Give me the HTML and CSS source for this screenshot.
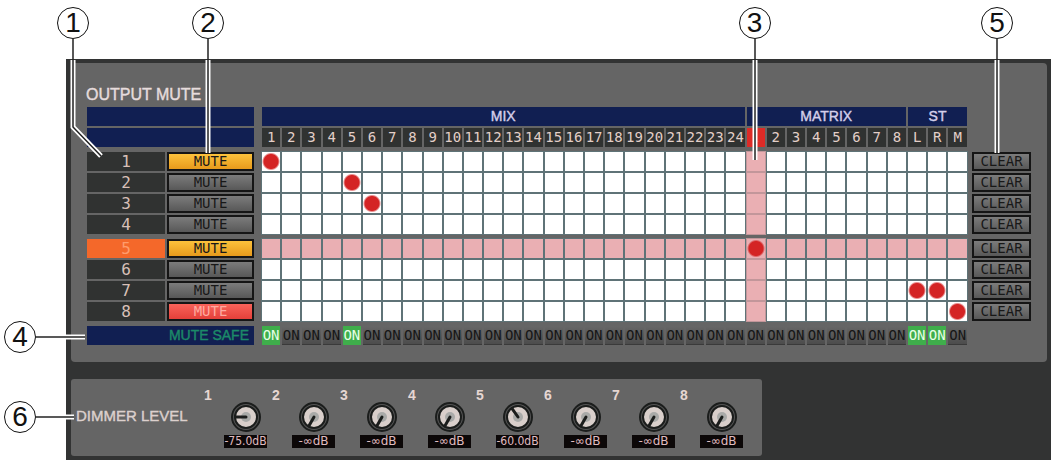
FILE: index.html
```html
<!DOCTYPE html>
<html lang="en">

<head>
  <meta charset="UTF-8">
  <meta name="viewport" content="width=device-width, initial-scale=1.0">
  <title>Output Mute</title>
  <link rel="stylesheet" href="styles.css">
</head>

<body>
  <div class="figure">
    <div class="console">
      <section class="panel">
        <h2 class="title">OUTPUT MUTE</h2>
        <table class="matrix">
          <colgroup>
            <col class="col-group">
            <col class="col-mute">
            <col class="col-gap">
            <col span="35">
            <col class="col-edge">
            <col class="col-clear">
          </colgroup>
          <thead>
            <tr>
              <td class="bar" colspan="2"></td>
              <td></td>
              <th class="bar" colspan="24">MIX</th>
              <th class="bar" colspan="8">MATRIX</th>
              <th class="bar" colspan="3">ST</th>
            </tr>
            <tr id="channels">
              <td class="bar" colspan="2"></td>
              <td></td>
            </tr>
          </thead>
          <tbody id="groups"></tbody>
          <tfoot>
            <tr class="space"><td></td></tr>
            <tr id="safe">
              <th class="bar safe-label" colspan="2">MUTE SAFE</th>
              <td></td>
            </tr>
          </tfoot>
        </table>
      </section>

      <section class="dimmer">
        <h2 class="dimmer-title">DIMMER LEVEL</h2>
        <div class="knobs" id="knobs"></div>
      </section>
    </div>

    <!-- callouts -->
    <div class="callout top one">
      <span class="num">1</span>
      <svg width="48" height="120" viewBox="0 0 48 120">
        <path class="halo" d="M16 21V88L44 117" />
        <path class="line" d="M16 0V88L44 117" />
      </svg>
    </div>
    <div class="callout top two">
      <span class="num">2</span>
      <svg width="32" height="114" viewBox="0 0 32 114">
        <path class="halo" d="M16 21V114" />
        <path class="line" d="M16 0V114" />
      </svg>
    </div>
    <div class="callout top three">
      <span class="num">3</span>
      <svg width="32" height="121" viewBox="0 0 32 121">
        <path class="halo" d="M16 21V121" />
        <path class="line" d="M16 0V121" />
      </svg>
    </div>
    <div class="callout top five">
      <span class="num">5</span>
      <svg width="32" height="114" viewBox="0 0 32 114">
        <path class="halo" d="M16 21V114" />
        <path class="line" d="M16 0V114" />
      </svg>
    </div>
    <div class="callout side four">
      <span class="num">4</span>
      <svg width="49" height="8" viewBox="0 0 49 8">
        <path class="halo" d="M30 4H49" />
        <path class="line" d="M0 4H49" />
      </svg>
    </div>
    <div class="callout side six">
      <span class="num">6</span>
      <svg width="38" height="8" viewBox="0 0 38 8">
        <path class="halo" d="M30 4H38" />
        <path class="line" d="M0 4H38" />
      </svg>
    </div>
  </div>

  <script>
    const channels = []
    for (let i = 1; i <= 24; i++) channels.push(String(i))
    for (let i = 1; i <= 8; i++) channels.push(String(i))
    channels.push('L', 'R', 'M')

    // selected crosspoint
    const selectedRow = 4
    const selectedCol = 24

    // assigned outputs of each mute group
    const groups = [
      { mute: 'on', assign: [0] },
      { mute: '', assign: [4] },
      { mute: '', assign: [5] },
      { mute: '', assign: [] },
      { mute: 'on', assign: [24] },
      { mute: '', assign: [] },
      { mute: '', assign: [32, 33] },
      { mute: 'dim', assign: [34] }
    ]
    const safe = [0, 4, 32, 33]

    const channelRow = document.getElementById('channels')
    channels.forEach((name, i) => {
      const cls = i === selectedCol ? 'channel selected' : 'channel'
      channelRow.insertAdjacentHTML('beforeend', `<th class="${cls}">${name}</th>`)
    })

    const space = '<tr class="space"><td></td></tr>'
    let rows = space
    groups.forEach((group, r) => {
      // rows are split in two blocks of four
      if (r === 4) rows += space
      const cells = channels.map((name, c) => {
        let cls = 'cell'
        if (c === selectedCol) cls += ' col-selected'
        if (r === selectedRow) cls += ' row-selected'
        const checked = group.assign.includes(c) ? 'checked' : ''
        return `<td class="${cls}"><input type="checkbox" aria-label="Group ${r + 1}, output ${c + 1}" ${checked}></td>`
      }).join('')
      rows += `<tr>
        <th class="group ${r === selectedRow ? 'selected' : ''}">${r + 1}</th>
        <td><button class="button mute ${group.mute}">MUTE</button></td>
        <td></td>
        ${cells}
        <td></td>
        <td><button class="button clear">CLEAR</button></td>
      </tr>`
    })
    document.getElementById('groups').innerHTML = rows

    const safeRow = document.getElementById('safe')
    channels.forEach((name, i) => {
      const cls = safe.includes(i) ? 'safe active' : 'safe'
      safeRow.insertAdjacentHTML('beforeend', `<td><button class="${cls}">ON</button></td>`)
    })

    // knob angle is clockwise from 12 o'clock
    const dimmers = [
      { db: '-75.0dB', angle: -90, value: 15 },
      { db: '-∞dB', angle: -150, value: 0 },
      { db: '-∞dB', angle: -150, value: 0 },
      { db: '-∞dB', angle: -150, value: 0 },
      { db: '-60.0dB', angle: -35, value: 35 },
      { db: '-∞dB', angle: -150, value: 0 },
      { db: '-∞dB', angle: -150, value: 0 },
      { db: '-∞dB', angle: -150, value: 0 }
    ]
    document.getElementById('knobs').innerHTML = dimmers.map((d, i) => `
      <div class="knob">
        <label for="dimmer${i + 1}">${i + 1}</label>
        <div class="dial">
          <svg width="30" height="30" viewBox="0 0 30 30">
            <circle cx="15" cy="15" r="14" fill="#555" stroke="#1b1d1c" stroke-width="2" />
            <circle cx="15" cy="15" r="11" fill="#d9cfcb" stroke="#1b1d1c" stroke-width="2" />
            <circle cx="15" cy="15" r="5" fill="#a9aaa8" />
            <path d="M15 15V5" stroke="#1b1d1c" stroke-width="3" stroke-linecap="round" transform="rotate(${d.angle} 15 15)" />
          </svg>
          <input type="range" id="dimmer${i + 1}" value="${d.value}">
        </div>
        <output class="${d.value ? '' : 'off'}" for="dimmer${i + 1}">${d.db}</output>
      </div>`).join('')
  </script>
</body>

</html>
```
FILE: styles.css
```css
* {
  box-sizing: border-box;
  margin: 0;
  padding: 0;
}

body {
  background: #fff;
  font-family: "Liberation Sans", Arial, sans-serif;
}

.figure {
  position: relative;
  min-width: 1000px;
  padding: 59px 8px 2px 66px;
}

.console {
  padding: 4px 4px 4px 5px;
  background: #323333;
}

.panel {
  padding: 21px 14px 15px;
  background: #656565;
  border-radius: 4px;
}

.title {
  padding-left: 1px;
  font-size: 16px;
  font-weight: normal;
  line-height: 21px;
  color: #e6dcdc;
  -webkit-text-stroke: 0.4px #e6dcdc;
}

/* matrix */
.matrix {
  width: 100%;
  table-layout: fixed;
  border-spacing: 2px;
  font-family: "DejaVu Sans Mono", monospace;
  font-size: 14px;
  line-height: 19px;
}

.matrix tr {
  height: 19px;
}

.matrix .space,
.matrix .space td {
  height: 1px;
  line-height: 0;
}

.matrix th {
  font-weight: normal;
  white-space: nowrap;
}

.col-group {
  width: 78px;
}

.col-mute {
  width: 87px;
}

.col-gap {
  width: 4px;
}

.col-edge {
  width: 1px;
}

.col-clear {
  width: 59px;
}

.bar {
  background: #111f52;
  font-family: "Liberation Sans", Arial, sans-serif;
  color: #d5cfea;
  -webkit-text-stroke: 0.4px #d5cfea;
}

.matrix .safe-label {
  padding-right: 5px;
  text-align: right;
  color: #1c8a68;
  -webkit-text-stroke: 0.4px #1c8a68;
}

.channel {
  background: #303231;
  color: #e3cfc8;
}

.channel.selected {
  background: #dd2b27;
  color: #e23a33;
}

.group {
  background: #303231;
  font-size: 16px;
  color: #d8c0b8;
}

.group.selected {
  background: #f4682a;
  color: #ff9c6c;
}

.cell {
  background: #fff;
  box-shadow: 0 0 0 1px #5f7377;
}

.cell.col-selected,
.cell.row-selected {
  background: #eaafb3;
}

.cell.col-selected {
  box-shadow: 0 0 0 1px #c2969a;
}

.cell input {
  display: block;
  appearance: none;
  width: 100%;
  height: 19px;
}

.cell input:checked {
  background: radial-gradient(circle, #d42424 7px, transparent 9px);
}

.button {
  display: block;
  width: 100%;
  height: 19px;
  border: 2px solid #151515;
  background: linear-gradient(#7c7c7c, #585858);
  font-family: inherit;
  font-size: 14px;
  line-height: 15px;
  color: #181818;
}

.mute.on {
  background: linear-gradient(#fcc23c, #e79a1c);
}

.mute.dim {
  background: linear-gradient(#f8635a, #e5403a);
  color: #ffaaa0;
}

.safe {
  display: block;
  width: 100%;
  height: 19px;
  border: 0;
  border-bottom: 1px solid #3a3a3a;
  background: linear-gradient(#666, #4c4c4c);
  font-family: inherit;
  font-size: 14px;
  line-height: 18px;
  color: #161616;
}

.safe.active {
  background: #3fae4b;
  border-color: #3fae4b;
  color: #e8ffe6;
}

/* dimmer */
.dimmer {
  display: flex;
  width: fit-content;
  margin-top: 17px;
  padding: 7px 14px 8px 5px;
  background: #656565;
  border-radius: 3px;
}

.dimmer-title {
  width: 128px;
  padding-top: 20px;
  font-size: 15px;
  font-weight: normal;
  line-height: 20px;
  white-space: nowrap;
  color: #dcd0cd;
  -webkit-text-stroke: 0.4px #dcd0cd;
}

.knobs {
  display: grid;
  grid-template-columns: repeat(8, 68px);
}

.knob {
  display: grid;
  grid-template-columns: 20px 43px;
  grid-template-rows: 13px 30px 13px;
  row-gap: 3px;
  color: #e6d6d2;
}

.knob label {
  font-size: 14px;
  font-weight: bold;
  line-height: 19px;
}

.dial {
  position: relative;
  grid-column: 2;
  grid-row: 2;
  justify-self: center;
  width: 30px;
  height: 30px;
}

.dial svg {
  display: block;
}

.dial input {
  position: absolute;
  inset: 0;
  width: 100%;
  opacity: 0;
}

.knob output {
  grid-column: 2;
  grid-row: 3;
  background: #0c0808;
  font-family: "DejaVu Sans Condensed", "DejaVu Sans", sans-serif;
  font-size: 12px;
  line-height: 13px;
  text-align: center;
  white-space: nowrap;
  color: #e0bcc0;
}

.knob .off {
  font-family: "DejaVu Sans", sans-serif;
}

/* callouts */
.callout {
  position: absolute;
  display: flex;
  pointer-events: none;
}

.callout.top {
  top: 7px;
  flex-direction: column;
}

.callout.side {
  left: 4px;
  align-items: center;
}

.num {
  width: 32px;
  height: 32px;
  border: 1px solid #111;
  border-radius: 50%;
  font-family: "Liberation Sans Narrow", "Liberation Sans", sans-serif;
  font-size: 28px;
  line-height: 30px;
  text-align: center;
  color: #111;
}

.halo,
.line {
  fill: none;
  stroke: #fff;
  stroke-width: 5;
}

.line {
  stroke: #222;
  stroke-width: 1.5;
}

.one {
  left: 57px;
}

.two {
  left: 192px;
}

/* centre of the first MATRIX column */
.three {
  left: calc(245px + (100% - 354px) * 0.7);
}

.five {
  right: 46px;
}

.four {
  top: 321px;
}

.six {
  top: 401px;
}
```
